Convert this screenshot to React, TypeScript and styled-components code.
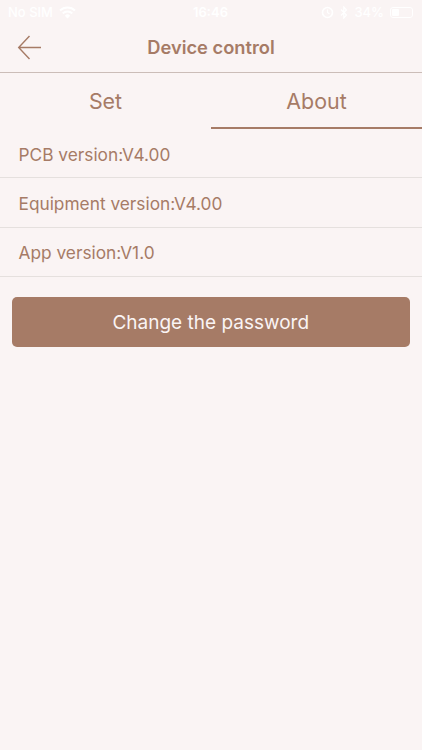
import React from 'react';
import styled, { createGlobalStyle } from 'styled-components';

const BROWN = '#a67b66';
const PAPER = '#faf4f4';

export default function App() {
    return (
        <>
            <GlobalStyle />
            <Page>
                <StatusBar>
                    <StatusSide>
                        <span>No SIM</span>
                        <svg width="17" height="13" viewBox="0 0 17 13" fill="none" stroke="#fff" strokeWidth="2">
                            <path d="M1 4.500a10.600 10.600 0 0 1 15 0" />
                            <path d="M3.700 7.400a6.800 6.800 0 0 1 9.600 0" />
                            <path d="M8.500 12.600L5.800 9.700a3.800 3.800 0 0 1 5.400 0z" fill="#fff" stroke="none" />
                        </svg>
                    </StatusSide>
                    <Clock>16:46</Clock>
                    <StatusRight>
                        <svg width="13" height="13" viewBox="0 0 13 13" fill="none" stroke="#fff" strokeWidth="1.600">
                            <circle cx="6.500" cy="6.500" r="5" />
                            <path d="M6.500 3.500v3l2 1.500" strokeWidth="1.200" />
                        </svg>
                        <svg width="8" height="13" viewBox="0 0 8 13" fill="none" stroke="#fff" strokeWidth="1.200">
                            <path d="M1 3.500l5.500 5.500-2.700 3V1l2.700 3L1 9.500" />
                        </svg>
                        <span>34%</span>
                        <Battery>
                            <BatteryLevel />
                        </Battery>
                    </StatusRight>
                </StatusBar>
                <NavBar>
                    <BackButton>
                        <svg width="26" height="26" viewBox="0 0 26 26" fill="none" stroke={BROWN} strokeWidth="1.400">
                            <path d="M24 12.500H2M12.500 1L1.700 12.500 12.500 24" />
                        </svg>
                    </BackButton>
                    <Title>Device control</Title>
                </NavBar>
                <Tabs>
                    <Tab>Set</Tab>
                    <Tab $active>About</Tab>
                </Tabs>
                <InfoRow>PCB version:V4.00</InfoRow>
                <InfoRow>Equipment version:V4.00</InfoRow>
                <InfoRow>App version:V1.0</InfoRow>
                <PasswordButton>Change the password</PasswordButton>
            </Page>
        </>
    )
}

const GlobalStyle = createGlobalStyle`
    html, body {
        margin: 0;
        padding: 0;
        background: ${PAPER};
    }
`

const Page = styled.div`
    width: 422px;
    height: 750px;
    overflow: hidden;
    display: flex;
    flex-direction: column;
    background: ${PAPER};
    font-family: Inter, "Liberation Sans", sans-serif;
    font-weight: 400;
    color: ${BROWN};
`

const StatusBar = styled.div`
    height: 24px;
    padding: 0 9px 0 8px;
    box-sizing: border-box;
    display: grid;
    grid-template-columns: 1fr auto 1fr;
    align-items: center;
    font-size: 13px;
    font-weight: 500;
    color: #fff;
`

const StatusSide = styled.div`
    display: flex;
    align-items: center;
    gap: 6px;
`

const StatusRight = styled(StatusSide)`
    justify-content: flex-end;
`

const Clock = styled.div`
    font-weight: 600;
`

const Battery = styled.div`
    width: 23px;
    height: 11px;
    box-sizing: border-box;
    padding: 1px;
    border: 1px solid #fff;
    border-radius: 3px;
    display: flex;
`

const BatteryLevel = styled.div`
    width: 7px;
    background: #fff;
    border-radius: 1px;
`

const NavBar = styled.div`
    position: relative;
    height: 49px;
    box-sizing: border-box;
    border-bottom: 1px solid #cbbdb8;
    display: flex;
    align-items: center;
    justify-content: center;
`

const BackButton = styled.div`
    position: absolute;
    left: 17px;
    top: 11px;
    height: 26px;
`

const Title = styled.div`
    font-size: 18.300px;
    font-weight: 600;
    margin-top: -2px;
`

const Tabs = styled.div`
    display: flex;
    height: 56px;
`

const Tab = styled.div<{ $active?: boolean }>`
    flex: 1;
    box-sizing: border-box;
    display: flex;
    align-items: center;
    justify-content: center;
    padding-top: 2px;
    font-size: 21.400px;
    border-bottom: 2px solid ${p => p.$active ? BROWN : 'transparent'};
`

const InfoRow = styled.div`
    height: 49.300px;
    box-sizing: border-box;
    padding: 2px 0 0 18.500px;
    display: flex;
    align-items: center;
    font-size: 17.300px;
    border-bottom: 1px solid #e5e0de;
`

const PasswordButton = styled.button`
    margin: 20px 12px 0 11.500px;
    height: 50px;
    padding: 2px 0 0;
    border: none;
    border-radius: 5px;
    background: ${BROWN};
    color: ${PAPER};
    font-family: inherit;
    font-size: 19px;
`
